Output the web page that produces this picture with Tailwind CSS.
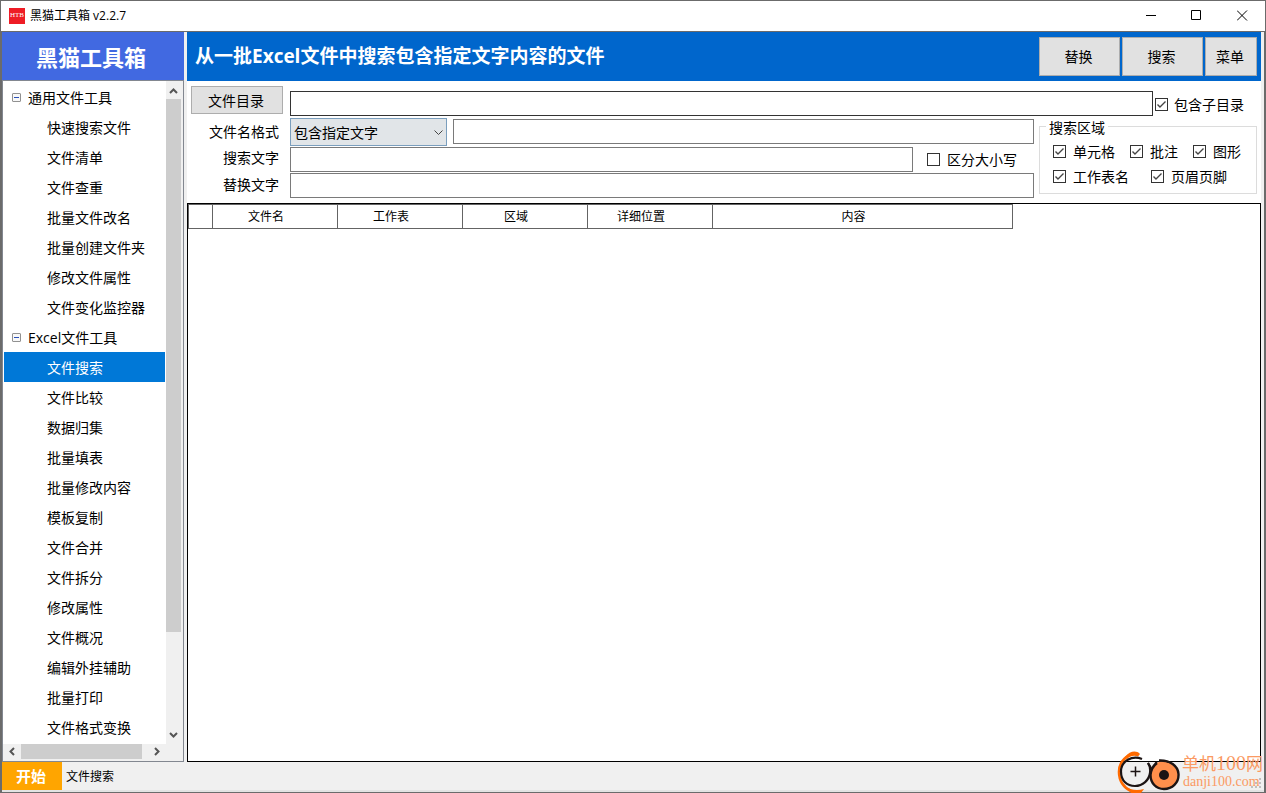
<!DOCTYPE html>
<html lang="zh-CN">
<head>
<meta charset="utf-8">
<meta name="viewport" content="width=device-width, initial-scale=1">
<title>黑猫工具箱 v2.2.7</title>
<script src="https://cdn.jsdelivr.net/npm/@tailwindcss/browser@4"></script>
</head>
<body class="h-screen overflow-hidden bg-[#6b6b6b] font-['Open_Sans','Noto_Sans_CJK_SC',sans-serif] text-sm text-black">
<div class="flex h-full flex-col pb-px">

  <!-- Title bar -->
  <header class="flex h-8 shrink-0 items-stretch border border-[#6b6b6b] bg-white text-xs">
    <div class="flex flex-1 items-center gap-[5px] pl-2 pb-px">
      <span class="flex size-4 items-center justify-center bg-[#ee1c25] font-['Liberation_Serif',serif] text-[7px] leading-none text-white">HTB</span>
      <span>黑猫工具箱 v2.2.7</span>
    </div>
    <button type="button" aria-label="最小化" class="flex w-[46px] items-center justify-center pb-px"><svg width="11" height="11" viewBox="0 0 11 11"><path d="M1 5.5H11" stroke="#000"/></svg></button>
    <button type="button" aria-label="最大化" class="flex w-[46px] items-center justify-center pb-px"><svg width="11" height="11" viewBox="0 0 11 11"><path d="M.5 .5H9.5V9.5H.5Z" fill="none" stroke="#000"/></svg></button>
    <button type="button" aria-label="关闭" class="flex w-[46px] items-center justify-center pb-px"><svg width="11" height="11" viewBox="0 0 11 11"><path d="M0 .5L10 10.5M10 .5L0 10.5" stroke="#000"/></svg></button>
  </header>

  <div class="mx-0.5 flex min-h-0 flex-1 flex-col bg-[#f0f0f0]">
    <div class="flex min-h-0 flex-1 gap-[3px] pr-[3px]">

      <!-- Sidebar -->
      <aside class="flex w-[182px] shrink-0 flex-col">
        <h2 class="flex h-12 shrink-0 items-center justify-center bg-[#4169e1] pr-1 pt-0.5 text-[22px] leading-none font-bold text-white">黑猫工具箱</h2>
        <div class="flex min-h-0 flex-1 flex-col border border-[#828790] bg-[#f0f0f0]">
          <div class="flex min-h-0 flex-1 pr-0.5">
            <nav class="min-w-0 flex-1 overflow-hidden bg-white pt-px pl-px pr-px leading-8">
              <ul>
                <li>
                  <div class="flex h-[30px] items-center pl-2">
                    <button type="button" aria-label="折叠" class="mr-[7px] flex size-[9px] items-center justify-center rounded-[1px] border border-[#919191] bg-[#f8f8f8]"><span class="h-px w-[5px] bg-[#2b50b8]"></span></button><span class="h-[30px]">通用文件工具</span>
                  </div>
                  <ul>
                    <li><a href="#" class="block h-[30px] pl-[43px]">快速搜索文件</a></li>
                    <li><a href="#" class="block h-[30px] pl-[43px]">文件清单</a></li>
                    <li><a href="#" class="block h-[30px] pl-[43px]">文件查重</a></li>
                    <li><a href="#" class="block h-[30px] pl-[43px]">批量文件改名</a></li>
                    <li><a href="#" class="block h-[30px] pl-[43px]">批量创建文件夹</a></li>
                    <li><a href="#" class="block h-[30px] pl-[43px]">修改文件属性</a></li>
                    <li><a href="#" class="block h-[30px] pl-[43px]">文件变化监控器</a></li>
                  </ul>
                </li>
                <li>
                  <div class="flex h-[30px] items-center pl-2">
                    <button type="button" aria-label="折叠" class="mr-[7px] flex size-[9px] items-center justify-center rounded-[1px] border border-[#919191] bg-[#f8f8f8]"><span class="h-px w-[5px] bg-[#2b50b8]"></span></button><span class="h-[30px]">Excel文件工具</span>
                  </div>
                  <ul>
                    <li><a href="#" aria-current="page" class="block h-[30px] bg-[#0078d7] pl-[43px] text-white">文件搜索</a></li>
                    <li><a href="#" class="block h-[30px] pl-[43px]">文件比较</a></li>
                    <li><a href="#" class="block h-[30px] pl-[43px]">数据归集</a></li>
                    <li><a href="#" class="block h-[30px] pl-[43px]">批量填表</a></li>
                    <li><a href="#" class="block h-[30px] pl-[43px]">批量修改内容</a></li>
                    <li><a href="#" class="block h-[30px] pl-[43px]">模板复制</a></li>
                    <li><a href="#" class="block h-[30px] pl-[43px]">文件合并</a></li>
                    <li><a href="#" class="block h-[30px] pl-[43px]">文件拆分</a></li>
                    <li><a href="#" class="block h-[30px] pl-[43px]">修改属性</a></li>
                    <li><a href="#" class="block h-[30px] pl-[43px]">文件概况</a></li>
                    <li><a href="#" class="block h-[30px] pl-[43px]">编辑外挂辅助</a></li>
                    <li><a href="#" class="block h-[30px] pl-[43px]">批量打印</a></li>
                    <li><a href="#" class="block h-[30px] pl-[43px]">文件格式变换</a></li>
                  </ul>
                </li>
              </ul>
            </nav>
            <!-- Vertical scrollbar -->
            <div class="flex w-[15px] shrink-0 flex-col">
              <button type="button" aria-label="向上滚动" class="flex h-[18px] items-center justify-center pt-0.5"><svg width="9" height="6" viewBox="0 0 9 6"><path d="M1 5L4.5 1.5L8 5" fill="none" stroke="#555" stroke-width="2"/></svg></button>
              <div class="flex-1"><div class="h-[85%] bg-[#cdcdcd]"></div></div>
              <button type="button" aria-label="向下滚动" class="flex h-[18px] items-center justify-center"><svg width="9" height="6" viewBox="0 0 9 6"><path d="M1 1L4.5 4.5L8 1" fill="none" stroke="#555" stroke-width="2"/></svg></button>
            </div>
          </div>
          <!-- Horizontal scrollbar -->
          <div class="flex h-[17px] shrink-0 pb-0.5 pl-px pr-[18px]">
            <button type="button" aria-label="向左滚动" class="flex w-[17px] items-center justify-center pr-0.5"><svg width="6" height="9" viewBox="0 0 6 9"><path d="M5 1L1.5 4.5L5 8" fill="none" stroke="#555" stroke-width="2"/></svg></button>
            <div class="flex-1"><div class="h-full w-[95%] bg-[#cdcdcd]"></div></div>
            <button type="button" aria-label="向右滚动" class="flex w-[17px] items-center justify-center"><svg width="6" height="9" viewBox="0 0 6 9"><path d="M1 1L4.5 4.5L1 8" fill="none" stroke="#555" stroke-width="2"/></svg></button>
          </div>
        </div>
      </aside>

      <!-- Main panel -->
      <main class="flex min-w-0 flex-1 flex-col">
        <div class="flex h-[49px] shrink-0 items-center gap-0.5 bg-[#0066cc] pl-2 pr-1">
          <h1 class="flex-1 pb-0.5 text-[19px] leading-7 font-bold text-white">从一批Excel文件中搜索包含指定文字内容的文件</h1>
          <button type="button" class="h-[39px] w-[81px] border border-[#adadad] bg-[#e1e1e1] pr-0.5">替换</button>
          <button type="button" class="h-[39px] w-[81px] border border-[#adadad] bg-[#e1e1e1] pr-0.5">搜索</button>
          <button type="button" class="h-[39px] w-[52px] border border-[#adadad] bg-[#e1e1e1] pr-0.5">菜单</button>
        </div>

        <form class="shrink-0 bg-white pt-[5px] pb-[5px] pl-1 pr-1">
          <div class="flex h-[30px] pr-3">
            <button type="button" class="h-7 w-[92px] self-start border border-[#adadad] bg-[#e1e1e1] pt-0.5 pr-0.5">文件目录</button>
            <input type="text" aria-label="文件目录" class="ml-[7px] h-[25px] min-w-0 flex-1 self-end border border-[#333] bg-white px-1">
            <label class="ml-0.5 flex h-[25px] items-center gap-1.5 self-end pt-0.5">
              <span class="relative flex"><input type="checkbox" checked class="peer size-[13px] appearance-none border border-[#333] bg-white"><svg class="pointer-events-none absolute inset-0 hidden peer-checked:block" width="13" height="13" viewBox="0 0 13 13"><path d="M2.5 6.5L5 9L10.5 3.5" fill="none" stroke="#444" stroke-width="1.4"/></svg></span><span class="pr-px">包含子目录</span></label>
          </div>

          <div class="mt-0.5 flex gap-[5px]">
            <div class="flex min-w-0 flex-1 flex-col gap-px">
              <div class="flex h-7 items-center">
                <label for="mode" class="w-[88px] text-right">文件名格式</label>
                <div class="relative ml-[11px] h-7 w-[157px]">
                  <select id="mode" class="h-full w-full appearance-none border border-[#7a9ebd] bg-[#e1e5e8] pl-[3px] pt-px"><option>包含指定文字</option></select>
                  <svg class="pointer-events-none absolute top-3 right-1" width="9" height="6" viewBox="0 0 9 6"><path d="M.5 .5L4.5 4.5L8.5 .5" fill="none" stroke="#444"/></svg>
                </div>
                <input type="text" aria-label="文件名格式文字" class="mb-0.5 ml-1.5 h-[25px] min-w-0 flex-1 border border-[#7a7a7a] bg-white px-1">
              </div>
              <div class="flex h-[25px] items-center">
                <label for="find" class="w-[88px] pb-[3px] text-right">搜索文字</label>
                <input id="find" type="text" class="ml-[11px] h-[25px] min-w-0 flex-1 border border-[#7a7a7a] bg-white px-1">
                <label class="ml-3.5 mr-[17px] flex items-center gap-[7px]"><input type="checkbox" class="size-[13px] appearance-none border border-[#333] bg-white">区分大小写</label>
              </div>
              <div class="flex h-[25px] items-center">
                <label for="replace" class="w-[88px] pb-0.5 text-right">替换文字</label>
                <input id="replace" type="text" class="ml-[11px] h-[25px] min-w-0 flex-1 border border-[#7a7a7a] bg-white px-1">
              </div>
            </div>

            <fieldset class="h-[76px] w-[218px] shrink-0 border border-[#dcdcdc] px-[13px] pt-[5px]">
              <legend class="-ml-[7px] h-4 px-[3px] leading-5">搜索区域</legend>
              <div class="flex h-[25px] items-center gap-[15px]">
                <label class="flex items-center gap-[7px]"><span class="relative flex"><input type="checkbox" checked class="peer size-[13px] appearance-none border border-[#333] bg-white"><svg class="pointer-events-none absolute inset-0 hidden peer-checked:block" width="13" height="13" viewBox="0 0 13 13"><path d="M2.5 6.5L5 9L10.5 3.5" fill="none" stroke="#444" stroke-width="1.4"/></svg></span>单元格</label>
                <label class="flex items-center gap-[7px]"><span class="relative flex"><input type="checkbox" checked class="peer size-[13px] appearance-none border border-[#333] bg-white"><svg class="pointer-events-none absolute inset-0 hidden peer-checked:block" width="13" height="13" viewBox="0 0 13 13"><path d="M2.5 6.5L5 9L10.5 3.5" fill="none" stroke="#444" stroke-width="1.4"/></svg></span>批注</label>
                <label class="flex items-center gap-[7px]"><span class="relative flex"><input type="checkbox" checked class="peer size-[13px] appearance-none border border-[#333] bg-white"><svg class="pointer-events-none absolute inset-0 hidden peer-checked:block" width="13" height="13" viewBox="0 0 13 13"><path d="M2.5 6.5L5 9L10.5 3.5" fill="none" stroke="#444" stroke-width="1.4"/></svg></span>图形</label>
              </div>
              <div class="flex h-[25px] items-center gap-[22px]">
                <label class="flex items-center gap-[7px]"><span class="relative flex"><input type="checkbox" checked class="peer size-[13px] appearance-none border border-[#333] bg-white"><svg class="pointer-events-none absolute inset-0 hidden peer-checked:block" width="13" height="13" viewBox="0 0 13 13"><path d="M2.5 6.5L5 9L10.5 3.5" fill="none" stroke="#444" stroke-width="1.4"/></svg></span>工作表名</label>
                <label class="flex items-center gap-[7px]"><span class="relative flex"><input type="checkbox" checked class="peer size-[13px] appearance-none border border-[#333] bg-white"><svg class="pointer-events-none absolute inset-0 hidden peer-checked:block" width="13" height="13" viewBox="0 0 13 13"><path d="M2.5 6.5L5 9L10.5 3.5" fill="none" stroke="#444" stroke-width="1.4"/></svg></span>页眉页脚</label>
              </div>
            </fieldset>
          </div>
        </form>

        <!-- Result table -->
        <div class="min-h-0 flex-1 border border-black bg-white">
          <table class="w-[825px] table-fixed border-separate border-spacing-0 text-xs">
            <thead>
              <tr class="h-[25px]">
                <th aria-label="行" class="w-[25px] border border-[#646464] p-0"></th>
                <th class="w-[125px] border-y border-r border-[#646464] p-0 pr-[18px] font-normal">文件名</th>
                <th class="w-[125px] border-y border-r border-[#646464] p-0 pr-[18px] font-normal">工作表</th>
                <th class="w-[125px] border-y border-r border-[#646464] p-0 pr-[18px] font-normal">区域</th>
                <th class="w-[125px] border-y border-r border-[#646464] p-0 pr-[18px] font-normal">详细位置</th>
                <th class="w-[300px] border-y border-r border-[#646464] p-0 pr-[18px] font-normal">内容</th>
              </tr>
            </thead>
          </table>
        </div>
      </main>
    </div>

    <!-- Status bar -->
    <footer class="flex h-[30px] shrink-0 items-stretch border-b-2 border-[#e3e3e3] text-xs">
      <button type="button" class="w-[60px] bg-[#ffa500] pr-0.5 text-[15px] leading-none font-bold text-white">开始</button>
      <span class="flex items-center pt-0.5 pl-1">文件搜索</span>
    </footer>
  </div>
</div>

<!-- Site badge over the lower right corner -->
<div class="pointer-events-none absolute right-0 bottom-0 flex h-[42px] w-[150px] overflow-hidden text-[#fb9a63]">
  <svg class="shrink-0" width="66" height="42" viewBox="0 0 66 42">
    <path d="M14 4C6 8 3 13 3 21C3 30 8 37 15 40" fill="none" stroke="#ff6a00" stroke-width="2.6"/>
    <path d="M9 6C14 0 20 -1 24 3L22 5.500C18 4 14 5 11 8Z" fill="#ff6a00"/>
    <path d="M10 36C15 39 21 40 28 38L25 42H15Z" fill="#ff6a00"/>
    <path d="M26 8C16 4 5 10 5 20.500C5 30 11 35 19 35C27 35 33 29 34 22C34.500 18 34 15 32 12" fill="none" stroke="#1c1414" stroke-width="2.2"/>
    <path d="M32 12C34 15 35 17 36 19C37 16 39 13 41 11" fill="none" stroke="#1c1414" stroke-width="2.2"/>
    <circle cx="48" cy="24" r="14" fill="#ff8f4c"/>
    <path d="M43 9.500C54 9 62 15 62.500 23C63 32 56 38 48 38C40 38 34.500 32 34.500 24C35 18 37 15 41 12" fill="none" stroke="#1c1414" stroke-width="2.4"/>
    <circle cx="48" cy="24" r="5" fill="#1c1414"/>
    <path d="M14.500 20.500H24.500M19.500 15.500V25.500" stroke="#1c1414" stroke-width="1.5"/>
  </svg>
  <div class="flex flex-col whitespace-nowrap">
    <span class="h-[23px] text-[17px] leading-6 font-['Noto_Sans_CJK_SC',sans-serif]">单机<span class="font-['Liberation_Serif',serif] text-xl leading-6">100</span>网</span>
    <span class="pl-px text-sm leading-4 font-['Liberation_Serif',serif]">danji100.com</span>
  </div>
</div>
<svg class="pointer-events-none absolute right-1 bottom-1" width="11" height="11" viewBox="0 0 11 11" fill="#bfbfbf"><path d="M8 0h2v2h-2zM4 4h2v2h-2zM8 4h2v2h-2zM0 8h2v2H0zM4 8h2v2h-2zM8 8h2v2h-2z"/></svg>
</body>
</html>
